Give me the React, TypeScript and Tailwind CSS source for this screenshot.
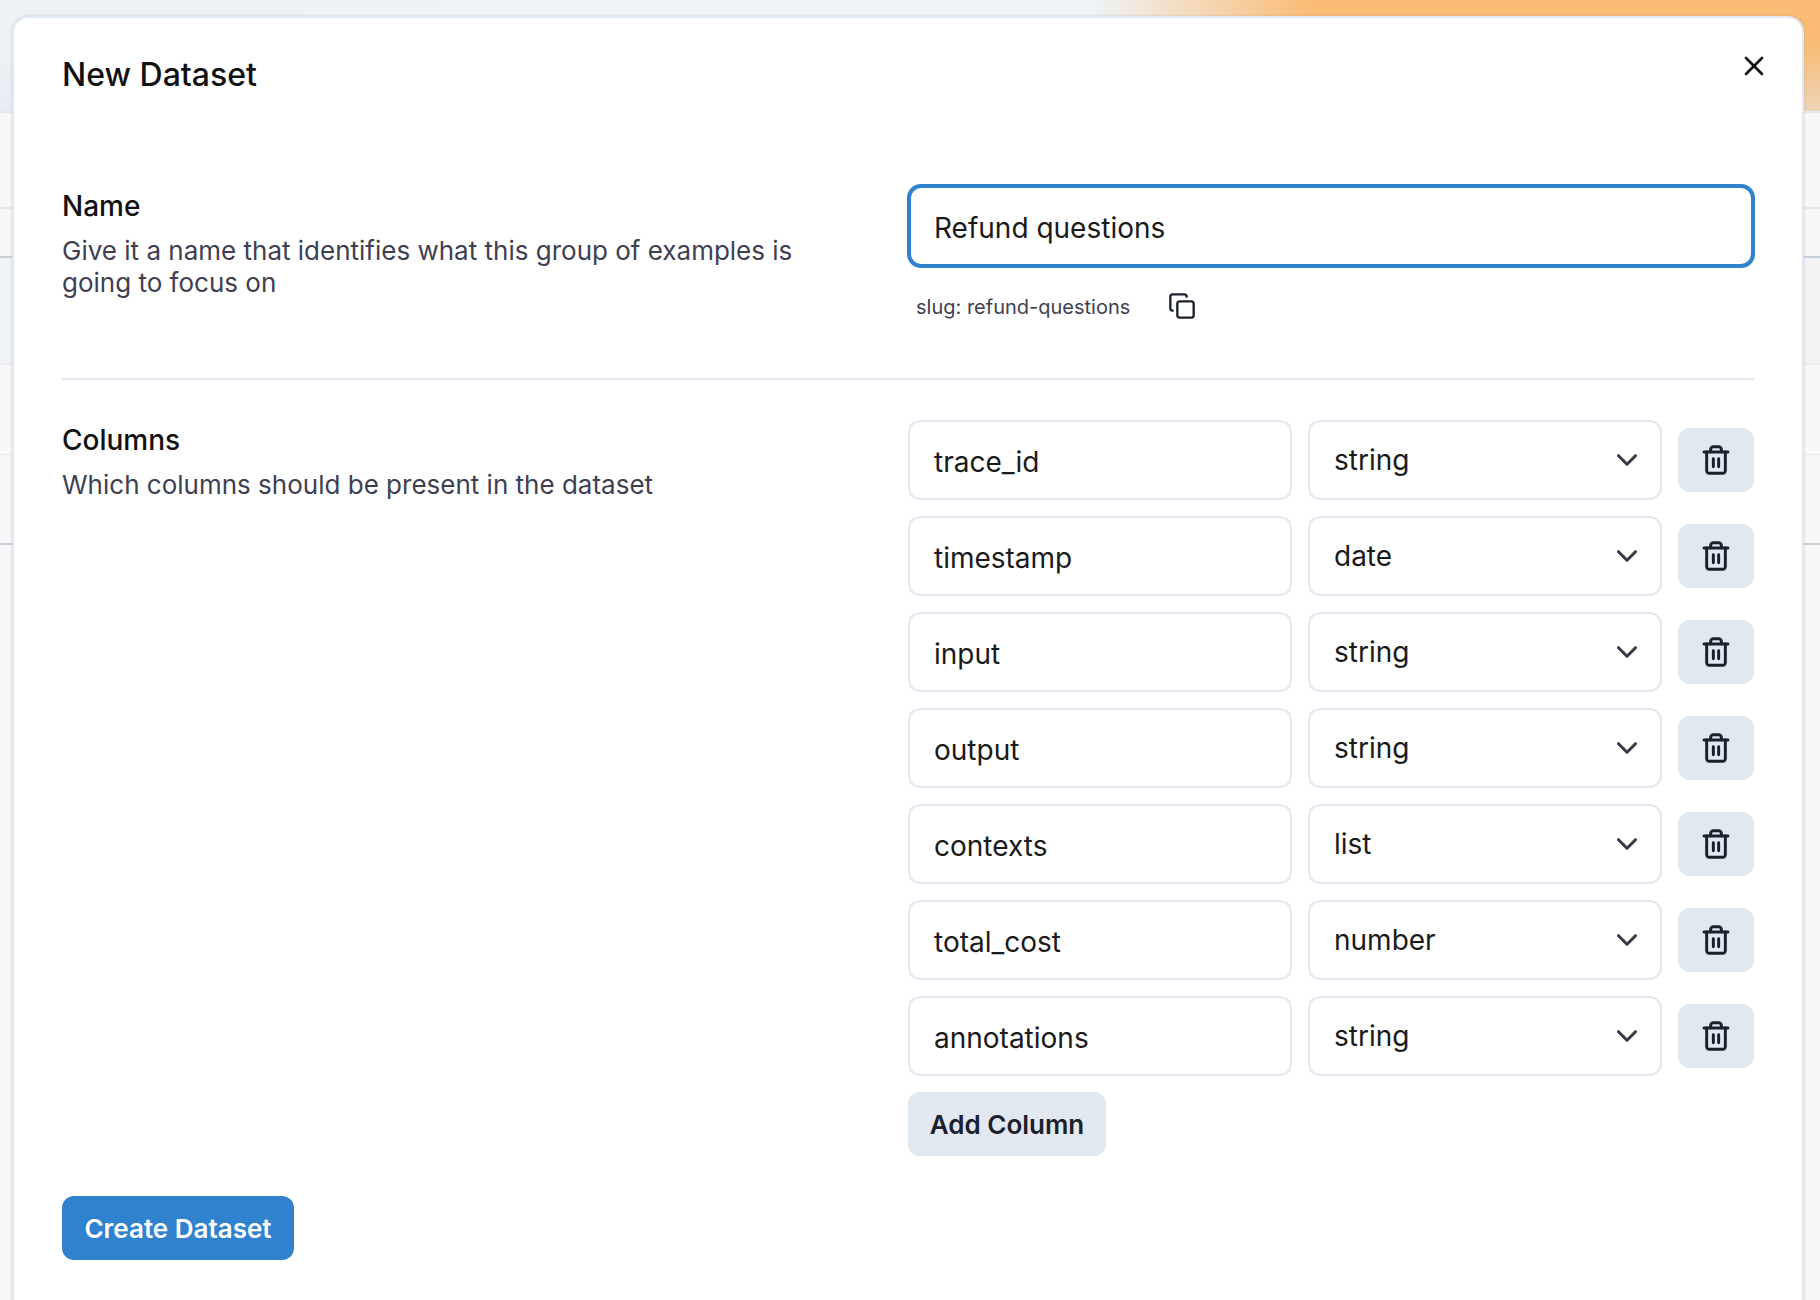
import { ChevronDown, Copy, Trash2, X } from "lucide-react";

const columns = [
  { name: "trace_id", type: "string" },
  { name: "timestamp", type: "date" },
  { name: "input", type: "string" },
  { name: "output", type: "string" },
  { name: "contexts", type: "list" },
  { name: "total_cost", type: "number" },
  { name: "annotations", type: "string" },
];

function Backdrop() {
  return (
    <div className="absolute inset-0 flex flex-col">
      <div className="h-[113px] shrink-0 bg-[linear-gradient(180deg,rgba(226,232,240,0)_40%,rgba(226,232,240,0.55)_100%),linear-gradient(90deg,#eef2f7_0%,#eff3f7_60%,#fabc75_72%,#fabc75_100%)] border-b-2 border-[#e2e8f0]" />
      <div className="h-[96px] shrink-0 bg-[#f8f8f8] border-b-2 border-[#e2e8f0]" />
      <div className="h-[49px] shrink-0 bg-[#f7f7f7] border-b-2 border-[#c8d0da]" />
      <div className="h-[107px] shrink-0 bg-[#f2f3f5] border-b border-[#e6e9ee]" />
      <div className="h-[90px] shrink-0 bg-[#f8f8f8] border-b border-[#e6e9ee]" />
      <div className="h-[90px] shrink-0 bg-[#f8f8f8] border-b-2 border-[#c8d0da]" />
      <div className="grow bg-[#f8f8f8]" />
    </div>
  );
}

function ColumnRow({ name, type }: { name: string; type: string }) {
  return (
    <div className="flex items-center gap-4">
      <div className="flex h-20 w-[384px] items-center rounded-xl border-2 border-[#e2e8f0] px-[24px] pt-[3px] text-[28px] text-[#1a1a1a]">
        {name}
      </div>
      <div className="flex h-20 w-[354px] items-center justify-between rounded-xl border-2 border-[#e2e8f0] pl-[24px] pr-[16px] text-[28px] text-[#1a1a1a]">
        <span>{type}</span>
        <ChevronDown className="h-[34px] w-[34px] text-[#3a3a4a]" strokeWidth={2.2} />
      </div>
      <button className="flex h-16 w-[76px] items-center justify-center rounded-xl bg-[#e2e8f0]">
        <Trash2 className="h-8 w-8 text-[#1a202c]" strokeWidth={2.2} />
      </button>
    </div>
  );
}

export default function App() {
  return (
    <div className="relative h-[1300px] w-[1820px] overflow-hidden font-['Inter',sans-serif]">
      <Backdrop />
      <div className="absolute left-3 top-4 h-[1320px] w-[1792px] rounded-t-2xl border-2 border-[#e2e8f0] bg-white px-[48px] shadow-[0_0_3px_rgba(100,116,139,0.25)]">
        <button className="absolute right-[32px] top-[32px] text-[#111]">
          <X className="h-8 w-8" strokeWidth={2} />
        </button>
        <h2 className="pt-[35px] text-[32px] font-medium leading-[44px] text-[#111]">New Dataset</h2>

        <section className="mt-[88px] flex h-[195px] border-b-2 border-[#e2e8f0]">
          <div className="w-[846px] shrink-0">
            <div className="pt-[3px] text-[28px] font-medium leading-[36px] text-[#111]">Name</div>
            <p className="mt-[11px] w-[740px] text-[26px] leading-[32px] text-[#3f3f52]">
              Give it a name that identifies what this group of examples is going to focus on
            </p>
          </div>
          <div className="grow">
            <div className="-mx-px -mt-px flex h-[84px] items-center rounded-[14px] border-4 border-[#3182ce] px-[23px] pt-[3px] text-[28px] text-[#1a1a1a]">
              Refund questions
            </div>
            <div className="mt-[24px] flex items-center pl-[8px] text-[20px] text-[#3f3f52]">
              <span>slug: refund-questions</span>
              <Copy className="ml-[38px] -mt-[2px] h-7 w-7 text-[#1a202c]" strokeWidth={2} />
            </div>
          </div>
        </section>

        <section className="mt-[40px] flex">
          <div className="w-[846px] shrink-0">
            <div className="pt-[2px] text-[28px] font-medium leading-[36px] text-[#111]">Columns</div>
            <p className="mt-[11px] text-[26px] leading-[32px] text-[#3f3f52]">
              Which columns should be present in the dataset
            </p>
          </div>
          <div className="flex grow flex-col gap-4">
            {columns.map((c) => (
              <ColumnRow key={c.name} name={c.name} type={c.type} />
            ))}
            <button className="h-16 w-[198px] rounded-xl bg-[#e2e8f0] text-[26px] font-semibold text-[#1a202c]">
              Add Column
            </button>
          </div>
        </section>

        <button className="mt-[40px] h-16 w-[232px] rounded-xl bg-[#3182ce] text-[26px] font-semibold text-white">
          Create Dataset
        </button>
      </div>
    </div>
  );
}
